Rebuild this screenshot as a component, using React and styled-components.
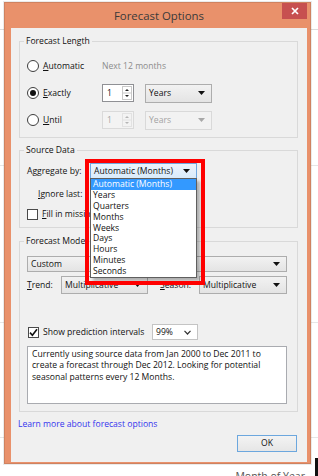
import React from 'react'
import styled, { createGlobalStyle } from 'styled-components'

const GlobalStyle = createGlobalStyle`
  html, body { margin: 0; padding: 0; background: #fff; }
  body { font-family: "Open Sans", "Noto Sans", sans-serif; color: #111; }
`

const FS = '8.6px'

const Desk = styled.div`
  width: 318px;
  height: 476px;
  overflow: hidden;
  display: grid;
  grid-template-columns: 311px 7px;
  grid-template-rows: 464px 12px;
  background:
    linear-gradient(#dcdcdc, #dcdcdc) 0 29px / 100% 1px no-repeat,
    linear-gradient(#e6e6e6, #e6e6e6) 0 165px / 100% 1px no-repeat,
    linear-gradient(#e6e6e6, #e6e6e6) 0 322px / 100% 1px no-repeat,
    linear-gradient(#e6e6e6, #e6e6e6) 0 437px / 100% 1px no-repeat,
    #fff;
`

const Window = styled.div`
  grid-column: 1;
  grid-row: 1;
  margin: 2px 0 0 4px;
  box-sizing: border-box;
  background: #e9916b;
  border: 1px solid #cf8260;
  box-shadow: 0 0 0 1px rgba(0, 0, 0, 0.08);
  display: flex;
  flex-direction: column;
  padding: 0 3px 1px 6px;
`

const TitleBar = styled.div`
  height: 25px;
  flex: none;
  display: grid;
  grid-template-columns: 1fr auto 1fr;
  align-items: center;
`

const Title = styled.div`
  grid-column: 2;
  font-size: 11.4px;
  color: #3a3a3a;
  line-height: 14px;
`

const Close = styled.div`
  grid-column: 3;
  justify-self: end;
  align-self: start;
  width: 25px;
  height: 16px;
  background: #c75050;
  display: flex;
  align-items: center;
  justify-content: center;
`

const Client = styled.div`
  flex: 1;
  background: #f0f0f0;
  padding: 0 9px 0 8px;
  display: flex;
  flex-direction: column;
  font-size: ${FS};
  line-height: 11px;
`

const Group = styled.div`
  position: relative;
  flex: none;
  border: 1px solid #d9d9d9;
  margin-top: ${p => p.$mt}px;
  padding: ${p => p.$pad};
  display: flex;
  flex-direction: column;
  gap: ${p => p.$gap || 0}px;
`

const Legend = styled.div`
  position: absolute;
  top: -7px;
  left: 4px;
  padding: 0 2px;
  background: #f0f0f0;
  line-height: 12px;
`

const LengthRow = styled.div`
  height: 20px;
  flex: none;
  display: grid;
  grid-template-columns: 64px 32px 67px;
  column-gap: 11px;
  align-items: center;
`

const Choice = styled.label`
  display: flex;
  align-items: center;
  gap: 4px;
  ${p => p.$indent && `padding-left: ${p.$indent}px;`}
  ${p => p.$w && `width: ${p.$w}px; flex: none;`}
`

const Key = styled.span`
  text-decoration: underline;
  text-underline-offset: 1px;
`

const Hint = styled.span`
  grid-column: 2 / span 2;
  color: #8c8c8c;
`

const Radio = styled.span`
  width: 12px;
  height: 12px;
  box-sizing: border-box;
  border-radius: 50%;
  border: 1px solid #3d3d3d;
  background: #fff;
  display: flex;
  align-items: center;
  justify-content: center;
  &::after {
    content: '';
    width: 6px;
    height: 6px;
    border-radius: 50%;
    background: ${p => (p.$on ? '#111' : 'transparent')};
  }
`

const Box = styled.span`
  width: 11px;
  height: 11px;
  flex: none;
  box-sizing: border-box;
  border: 1px solid #4a4a4a;
  background: #fff;
  display: flex;
  align-items: center;
  justify-content: center;
`

const Spin = styled.div`
  width: 32px;
  height: 18px;
  box-sizing: border-box;
  border: 1px solid ${p => (p.$off ? '#dadada' : '#8f9094')};
  background: ${p => (p.$off ? '#f3f3f3' : '#fff')};
  color: ${p => (p.$off ? '#a5a5a5' : '#111')};
  display: flex;
  align-items: center;
  padding: 0 1px 0 4px;
`

const SpinValue = styled.span`
  flex: 1;
`

const selectSkins = {
  normal: 'border: 1px solid #adadad; background: linear-gradient(#f2f2f2, #e4e4e4); color: #111;',
  off: 'border: 1px solid #d9d9d9; background: #f2f2f2; color: #a3a3a3;',
  open: 'border: 1px solid #6fa8e0; background: linear-gradient(#ecf4fc, #d9ebfb); color: #111;',
  white: 'border: 1px solid #c4c4c4; background: #fff; color: #111;',
}

const Select = styled.div`
  position: relative;
  flex: ${p => (p.$grow ? '1 1 auto' : 'none')};
  ${p => p.$w && `width: ${p.$w}px;`}
  height: ${p => p.$h}px;
  box-sizing: border-box;
  ${p => selectSkins[p.$skin || 'normal']}
  display: flex;
  align-items: center;
  justify-content: space-between;
  padding: 0 6px 0 3px;
`

const SourceRow = styled.div`
  flex: none;
  height: ${p => p.$h}px;
  margin-top: ${p => p.$mt || 0}px;
  display: grid;
  grid-template-columns: ${p => p.$cols};
  align-items: center;
`

const List = styled.div`
  position: absolute;
  top: 100%;
  left: -1px;
  width: 107px;
  box-sizing: border-box;
  border: 1px solid #5f5f5f;
  background: #fff;
  box-shadow: 3px 3px 3px rgba(0, 0, 0, 0.28);
  z-index: 2;
`

const Item = styled.div`
  height: 10.9px;
  line-height: 10.9px;
  padding-left: 2px;
  background: ${p => (p.$on ? '#3399ff' : 'transparent')};
  color: ${p => (p.$on ? '#fff' : '#111')};
`

const Highlight = styled.div`
  position: absolute;
  left: -6px;
  top: -5px;
  width: 120px;
  height: 126px;
  box-sizing: border-box;
  border: 4px solid #ff0000;
  z-index: 3;
  pointer-events: none;
`

const ModelRow = styled.div`
  flex: none;
  display: flex;
  align-items: center;
  height: ${p => p.$h}px;
  margin-top: ${p => p.$mt}px;
`

const FieldLabel = styled.span`
  width: ${p => p.$w}px;
  margin-left: ${p => p.$ml || 0}px;
  flex: none;
`

const Summary = styled.div`
  flex: none;
  margin-top: 6px;
  height: 58px;
  box-sizing: border-box;
  border: 1px solid #a9abb0;
  background: #fff;
  padding: 2px 4px;
  line-height: 11.3px;
  color: #111;
`

const Link = styled.a`
  margin-top: 6px;
  margin-left: -1px;
  line-height: 12px;
  color: #3434ee;
  text-decoration: none;
`

const OkButton = styled.button`
  align-self: flex-end;
  margin: 5px 1px 0 0;
  width: 60px;
  height: 17px;
  box-sizing: border-box;
  border: 1px solid #6ca7de;
  background: linear-gradient(#f3f3f3, #e6e6e6);
  font: inherit;
  color: #111;
  padding: 0;
`

const Caption = styled.div`
  grid-column: 1;
  grid-row: 2;
  text-align: right;
  padding: 6px 6px 0 0;
  font-size: 10.5px;
  color: #555;
  line-height: 12px;
`

const Bar = styled.div`
  grid-column: 2;
  grid-row: 1 / span 2;
  align-self: end;
  justify-self: end;
  width: 3px;
  height: 18px;
  background: #111;
`

const Triangle = ({ color = '#111' }) => (
  <svg width="7" height="4" viewBox="0 0 7 4">
    <path d="M0 0H7L3.5 4Z" fill={color} />
  </svg>
)

const Chevron = () => (
  <svg width="7" height="5" viewBox="0 0 7 5">
    <path d="M0.5 0.8L3.5 4L6.5 0.8" fill="none" stroke="#333" strokeWidth="1.2" />
  </svg>
)

const SpinArrows = ({ off }) => {
  const c = off ? '#b5b5b5' : '#222'
  const edge = off ? '#e2e2e2' : '#c9c9c9'
  return (
    <svg width="10" height="14" viewBox="0 0 10 14">
      <rect x="0.5" y="0.5" width="9" height="13" fill="none" stroke={edge} />
      <line x1="1" y1="7" x2="9" y2="7" stroke={edge} />
      <path d="M3 5H7L5 3Z" fill={c} />
      <path d="M3 9H7L5 11Z" fill={c} />
    </svg>
  )
}

const Tick = () => (
  <svg width="9" height="9" viewBox="0 0 9 9">
    <path d="M1 4.6L3.4 7.2L8 1.2" fill="none" stroke="#111" strokeWidth="1.6" />
  </svg>
)

const units = ['Automatic (Months)', 'Years', 'Quarters', 'Months', 'Weeks', 'Days', 'Hours', 'Minutes', 'Seconds']

export default function App() {
  return (
    <>
      <GlobalStyle />
      <Desk>
        <Window>
          <TitleBar>
            <Title>Forecast Options</Title>
            <Close>
              <svg width="8" height="8" viewBox="0 0 8 8">
                <path d="M1 1L7 7M7 1L1 7" stroke="#fff" strokeWidth="1.7" />
              </svg>
            </Close>
          </TitleBar>
          <Client>
            <Group $mt={13} $pad="14px 10px 7px 7px" $gap={7}>
              <Legend>Forecast Length</Legend>
              <LengthRow>
                <Choice><Radio /><span><Key>A</Key>utomatic</span></Choice>
                <Hint>Next 12 months</Hint>
              </LengthRow>
              <LengthRow>
                <Choice><Radio $on /><span><Key>E</Key>xactly</span></Choice>
                <Spin><SpinValue>1</SpinValue><SpinArrows /></Spin>
                <Select $w={67} $h={19}>Years<Triangle /></Select>
              </LengthRow>
              <LengthRow>
                <Choice><Radio /><span><Key>U</Key>ntil</span></Choice>
                <Spin $off><SpinValue>1</SpinValue><SpinArrows off /></Spin>
                <Select $w={67} $h={19} $skin="off">Years<Triangle color="#a8a8a8" /></Select>
              </LengthRow>
            </Group>

            <Group $mt={12} $pad="11px 10px 3px 7px">
              <Legend>Source Data</Legend>
              <SourceRow $h={18} $cols="63px 107px">
                <span>Aggregate by:</span>
                <Select $w={107} $h={16} $skin="open">
                  Automatic (Months)<Triangle />
                  <List>
                    {units.map((u, i) => (
                      <Item key={u} $on={i === 0}>{u}</Item>
                    ))}
                  </List>
                  <Highlight />
                </Select>
              </SourceRow>
              <SourceRow $h={20} $mt={4} $cols="63px 32px">
                <Choice $indent={11}><span><Key>I</Key>gnore last:</span></Choice>
                <Spin><SpinValue>1</SpinValue><SpinArrows /></Spin>
              </SourceRow>
              <SourceRow $h={20} $cols="1fr">
                <Choice><Box /><span><Key>F</Key>ill in missing values with zeros</span></Choice>
              </SourceRow>
            </Group>

            <Group $mt={13} $pad="14px 10px 7px 7px">
              <Legend>Forecast Model</Legend>
              <Select $h={16}>Custom<Triangle /></Select>
              <ModelRow $h={18} $mt={4}>
                <FieldLabel $w={34}><Key>T</Key>rend:</FieldLabel>
                <Select $w={87} $h={18}>Multiplicative<Triangle /></Select>
                <FieldLabel $w={39} $ml={12}><Key>S</Key>eason:</FieldLabel>
                <Select $grow $h={18}>Multiplicative<Triangle /></Select>
              </ModelRow>
              <ModelRow $h={16} $mt={30}>
                <Choice $w={124} style={{ paddingLeft: 1 }}><Box><Tick /></Box><span>Show prediction intervals</span></Choice>
                <Select $w={46} $h={16} $skin="white">99%<Chevron /></Select>
              </ModelRow>
              <Summary>
                Currently using source data from Jan 2000 to Dec 2011 to<br />
                create a forecast through Dec 2012. Looking for potential<br />
                seasonal patterns every 12 Months.
              </Summary>
            </Group>

            <Link href="#">Learn more about forecast options</Link>
            <OkButton>OK</OkButton>
          </Client>
        </Window>
        <Caption>Month of Year</Caption>
        <Bar />
      </Desk>
    </>
  )
}
